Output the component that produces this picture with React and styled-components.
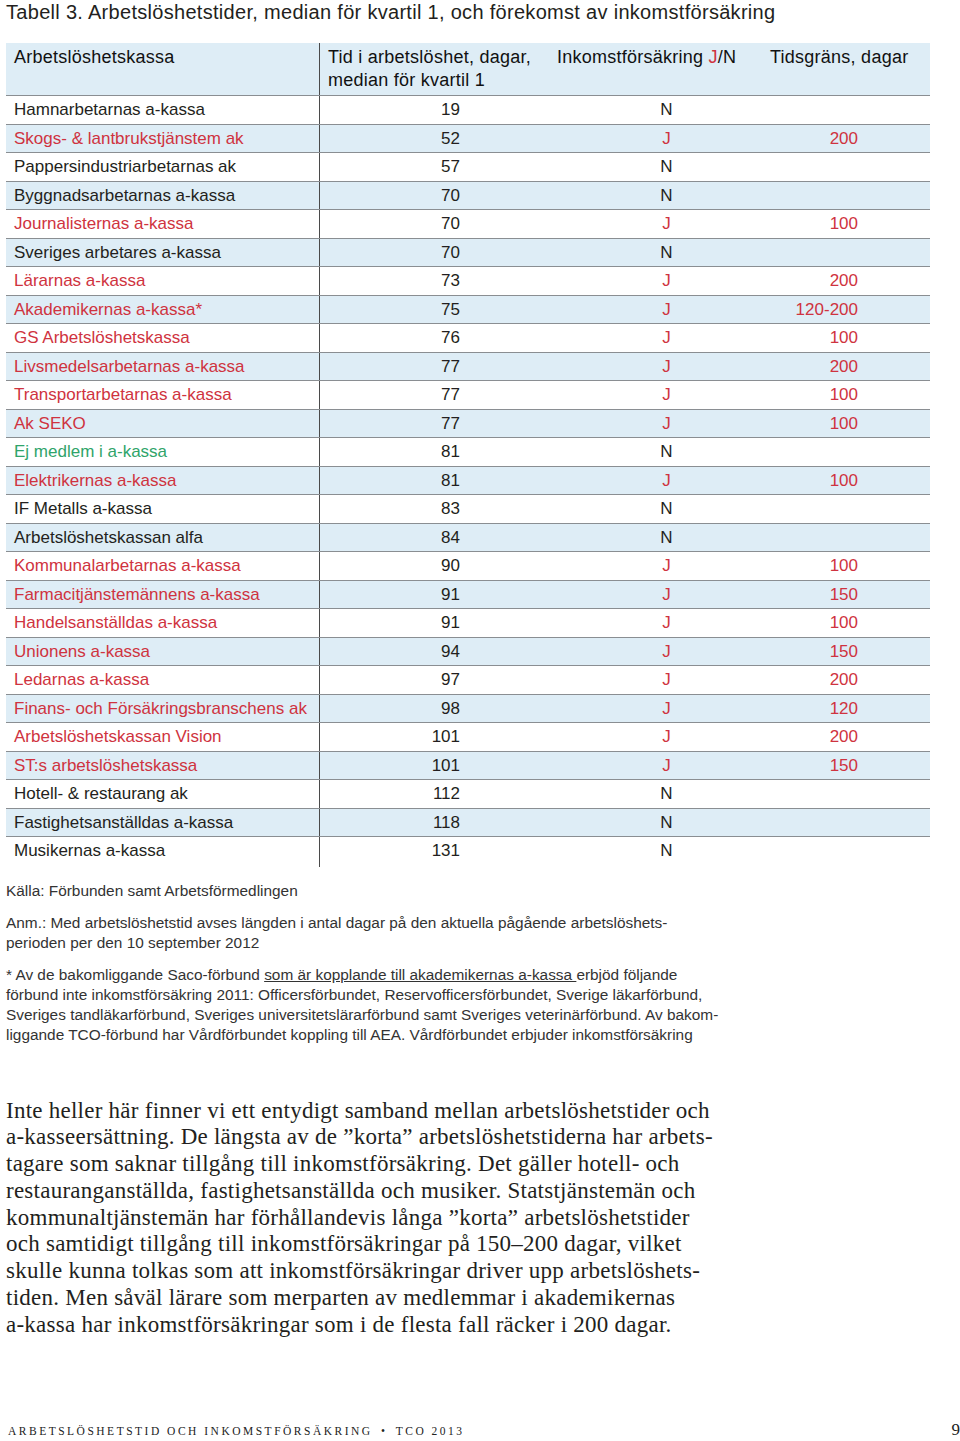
import styled, { createGlobalStyle } from "styled-components"

const RED = "#cf3340"
const GREEN = "#2fa46a"
const INK = "#231f20"
const BLUE = "#deedf6"

const rows = [
	["Hamnarbetarnas a-kassa", "19", "N", "", "ink"],
	["Skogs- & lantbrukstjänstem ak", "52", "J", "200", "red"],
	["Pappersindustriarbetarnas ak", "57", "N", "", "ink"],
	["Byggnadsarbetarnas a-kassa", "70", "N", "", "ink"],
	["Journalisternas a-kassa", "70", "J", "100", "red"],
	["Sveriges arbetares a-kassa", "70", "N", "", "ink"],
	["Lärarnas a-kassa", "73", "J", "200", "red"],
	["Akademikernas a-kassa*", "75", "J", "120-200", "red"],
	["GS Arbetslöshetskassa", "76", "J", "100", "red"],
	["Livsmedelsarbetarnas a-kassa", "77", "J", "200", "red"],
	["Transportarbetarnas a-kassa", "77", "J", "100", "red"],
	["Ak SEKO", "77", "J", "100", "red"],
	["Ej medlem i a-kassa", "81", "N", "", "green"],
	["Elektrikernas a-kassa", "81", "J", "100", "red"],
	["IF Metalls a-kassa", "83", "N", "", "ink"],
	["Arbetslöshetskassan alfa", "84", "N", "", "ink"],
	["Kommunalarbetarnas a-kassa", "90", "J", "100", "red"],
	["Farmacitjänstemännens a-kassa", "91", "J", "150", "red"],
	["Handelsanställdas a-kassa", "91", "J", "100", "red"],
	["Unionens a-kassa", "94", "J", "150", "red"],
	["Ledarnas a-kassa", "97", "J", "200", "red"],
	["Finans- och Försäkringsbranschens ak", "98", "J", "120", "red"],
	["Arbetslöshetskassan Vision", "101", "J", "200", "red"],
	["ST:s arbetslöshetskassa", "101", "J", "150", "red"],
	["Hotell- & restaurang ak", "112", "N", "", "ink"],
	["Fastighetsanställdas a-kassa", "118", "N", "", "ink"],
	["Musikernas a-kassa", "131", "N", "", "ink"],
]

const tones = { ink: INK, red: RED, green: GREEN }

const bodyLines = [
	"Inte heller här finner vi ett entydigt samband mellan arbetslöshetstider och",
	"a-kasseersättning. De längsta av de ”korta” arbetslöshetstiderna har arbets-",
	"tagare som saknar tillgång till inkomstförsäkring. Det gäller hotell- och",
	"restauranganställda, fastighetsanställda och musiker. Statstjänstemän och",
	"kommunaltjänstemän har förhållandevis långa ”korta” arbetslöshetstider",
	"och samtidigt tillgång till inkomstförsäkringar på 150–200 dagar, vilket",
	"skulle kunna tolkas som att inkomstförsäkringar driver upp arbetslöshets-",
	"tiden. Men såväl lärare som merparten av medlemmar i akademikernas",
	"a-kassa har inkomstförsäkringar som i de flesta fall räcker i 200 dagar.",
]

const GlobalStyle = createGlobalStyle`
	html, body {
		margin: 0;
		padding: 0;
		background: #ffffff;
	}
	body {
		font-family: "Liberation Sans", Arial, sans-serif;
		color: ${INK};
	}
`

const App = () => {
	return (
		<>
			<GlobalStyle />
			<Page>
				<Title>
					Tabell 3. Arbetslöshetstider, median för kvartil 1, och förekomst av
					inkomstförsäkring
				</Title>
				<Table>
					<HeadRow>
						<HeadCell $divider>Arbetslöshetskassa</HeadCell>
						<HeadCell $pad="8px">
							Tid i arbetslöshet, dagar,
							<br />
							median för kvartil 1
						</HeadCell>
						<HeadCell $pad="12px">
							Inkomstförsäkring <Red>J</Red>/N
						</HeadCell>
						<HeadCell $pad="10px">Tidsgräns, dagar</HeadCell>
					</HeadRow>
					{rows.map(([name, days, yn, limit, tone], i) => (
						<Row key={name} $striped={i % 2 === 1} $last={i === rows.length - 1}>
							<NameCell $color={tones[tone]}>{name}</NameCell>
							<DaysCell>{days}</DaysCell>
							<FlagCell $color={yn === "J" ? RED : INK}>{yn}</FlagCell>
							<LimitCell>{limit}</LimitCell>
						</Row>
					))}
				</Table>

				<Notes>
					<Note>Källa: Förbunden samt Arbetsförmedlingen</Note>
					<Note>
						Anm.: Med arbetslöshetstid avses längden i antal dagar på den aktuella
						pågående arbetslöshets-
						<br />
						perioden per den 10 september 2012
					</Note>
					<Note>
						* Av de bakomliggande Saco-förbund{" "}
						<Underlined>som är kopplande till akademikernas a-kassa </Underlined>
						erbjöd följande
						<br />
						förbund inte inkomstförsäkring 2011: Officersförbundet,
						Reservofficersförbundet, Sverige läkarförbund,
						<br />
						Sveriges tandläkarförbund, Sveriges universitetslärarförbund samt
						Sveriges veterinärförbund. Av bakom-
						<br />
						liggande TCO-förbund har Vårdförbundet koppling till AEA.
						Vårdförbundet erbjuder inkomstförsäkring
					</Note>
				</Notes>

				<BodyText>
					{bodyLines.map((line) => (
						<span key={line}>
							{line}
							<br />
						</span>
					))}
				</BodyText>

				<Footer>
					<RunningHead>
						Arbetslöshetstid och inkomstförsäkring <Bullet>•</Bullet> TCO 2013
					</RunningHead>
					<PageNumber>9</PageNumber>
				</Footer>
			</Page>
		</>
	)
}

const Page = styled.div`
	width: 960px;
	height: 1441px;
	box-sizing: border-box;
	padding: 0 0 0 6px;
	display: flex;
	flex-direction: column;
	overflow: hidden;
`

const Title = styled.h1`
	margin: 0;
	font-size: 20px;
	line-height: 24px;
	font-weight: 400;
	color: ${INK};
	letter-spacing: 0.3px;
`

const Table = styled.div`
	margin-top: 19px;
	width: 924px;
	display: flex;
	flex-direction: column;
	font-size: 17px;
`

const columns = "314px 225px 215px 170px"

const HeadRow = styled.div`
	display: grid;
	grid-template-columns: ${columns};
	background: ${BLUE};
	border-bottom: 1.5px solid #8a8e92;
	height: 53px;
	box-sizing: border-box;
`

const HeadCell = styled.div`
	padding: 3px 0 0 ${(p) => p.$pad || "8px"};
	font-size: 18px;
	letter-spacing: 0.25px;
	line-height: 23px;
	font-weight: 400;
	color: #111;
	white-space: nowrap;
	border-right: ${(p) => (p.$divider ? "1.5px solid #4a4a4a" : "none")};
`

const Red = styled.span`
	color: ${RED};
`

const Row = styled.div`
	display: grid;
	grid-template-columns: ${columns};
	height: ${(p) => (p.$last ? "30px" : "28.5px")};
	box-sizing: border-box;
	background: ${(p) => (p.$striped ? BLUE : "#ffffff")};
	border-bottom: ${(p) => (p.$last ? "none" : "1.5px solid #8a8e92")};
	line-height: 27px;
	color: ${INK};
`

const NameCell = styled.div`
	padding-left: 8px;
	color: ${(p) => p.$color};
	border-right: 1.5px solid #4a4a4a;
	white-space: nowrap;
`

const DaysCell = styled.div`
	text-align: right;
	padding-right: 85px;
`

const FlagCell = styled.div`
	text-align: center;
	padding-left: 28px;
	color: ${(p) => p.$color};
`

const LimitCell = styled.div`
	text-align: right;
	padding-right: 72px;
	color: ${RED};
`

const Notes = styled.div`
	margin-top: 14px;
	display: flex;
	flex-direction: column;
	gap: 12px;
	font-size: 15.4px;
	line-height: 19.8px;
	color: #333;
`

const Note = styled.p`
	margin: 0;
	white-space: nowrap;
	&:last-child {
		margin-top: 1px;
	}
`

const Underlined = styled.span`
	text-decoration: underline;
`

const BodyText = styled.p`
	margin: 53px 0 0;
	font-family: "Liberation Serif", "Times New Roman", serif;
	font-size: 23px;
	letter-spacing: 0.25px;
	line-height: 26.75px;
	color: ${INK};
	white-space: nowrap;
`

const Footer = styled.div`
	margin-top: auto;
	margin-bottom: 1px;
	display: flex;
	justify-content: space-between;
	align-items: baseline;
	font-family: "Liberation Serif", "Times New Roman", serif;
`

const RunningHead = styled.span`
	font-size: 11.5px;
	text-transform: uppercase;
	letter-spacing: 2.5px;
	padding-left: 2px;
	color: #222;
`

const Bullet = styled.span`
	margin: 0 3px;
`

const PageNumber = styled.span`
	font-size: 17px;
	color: #222;
`

export default App
